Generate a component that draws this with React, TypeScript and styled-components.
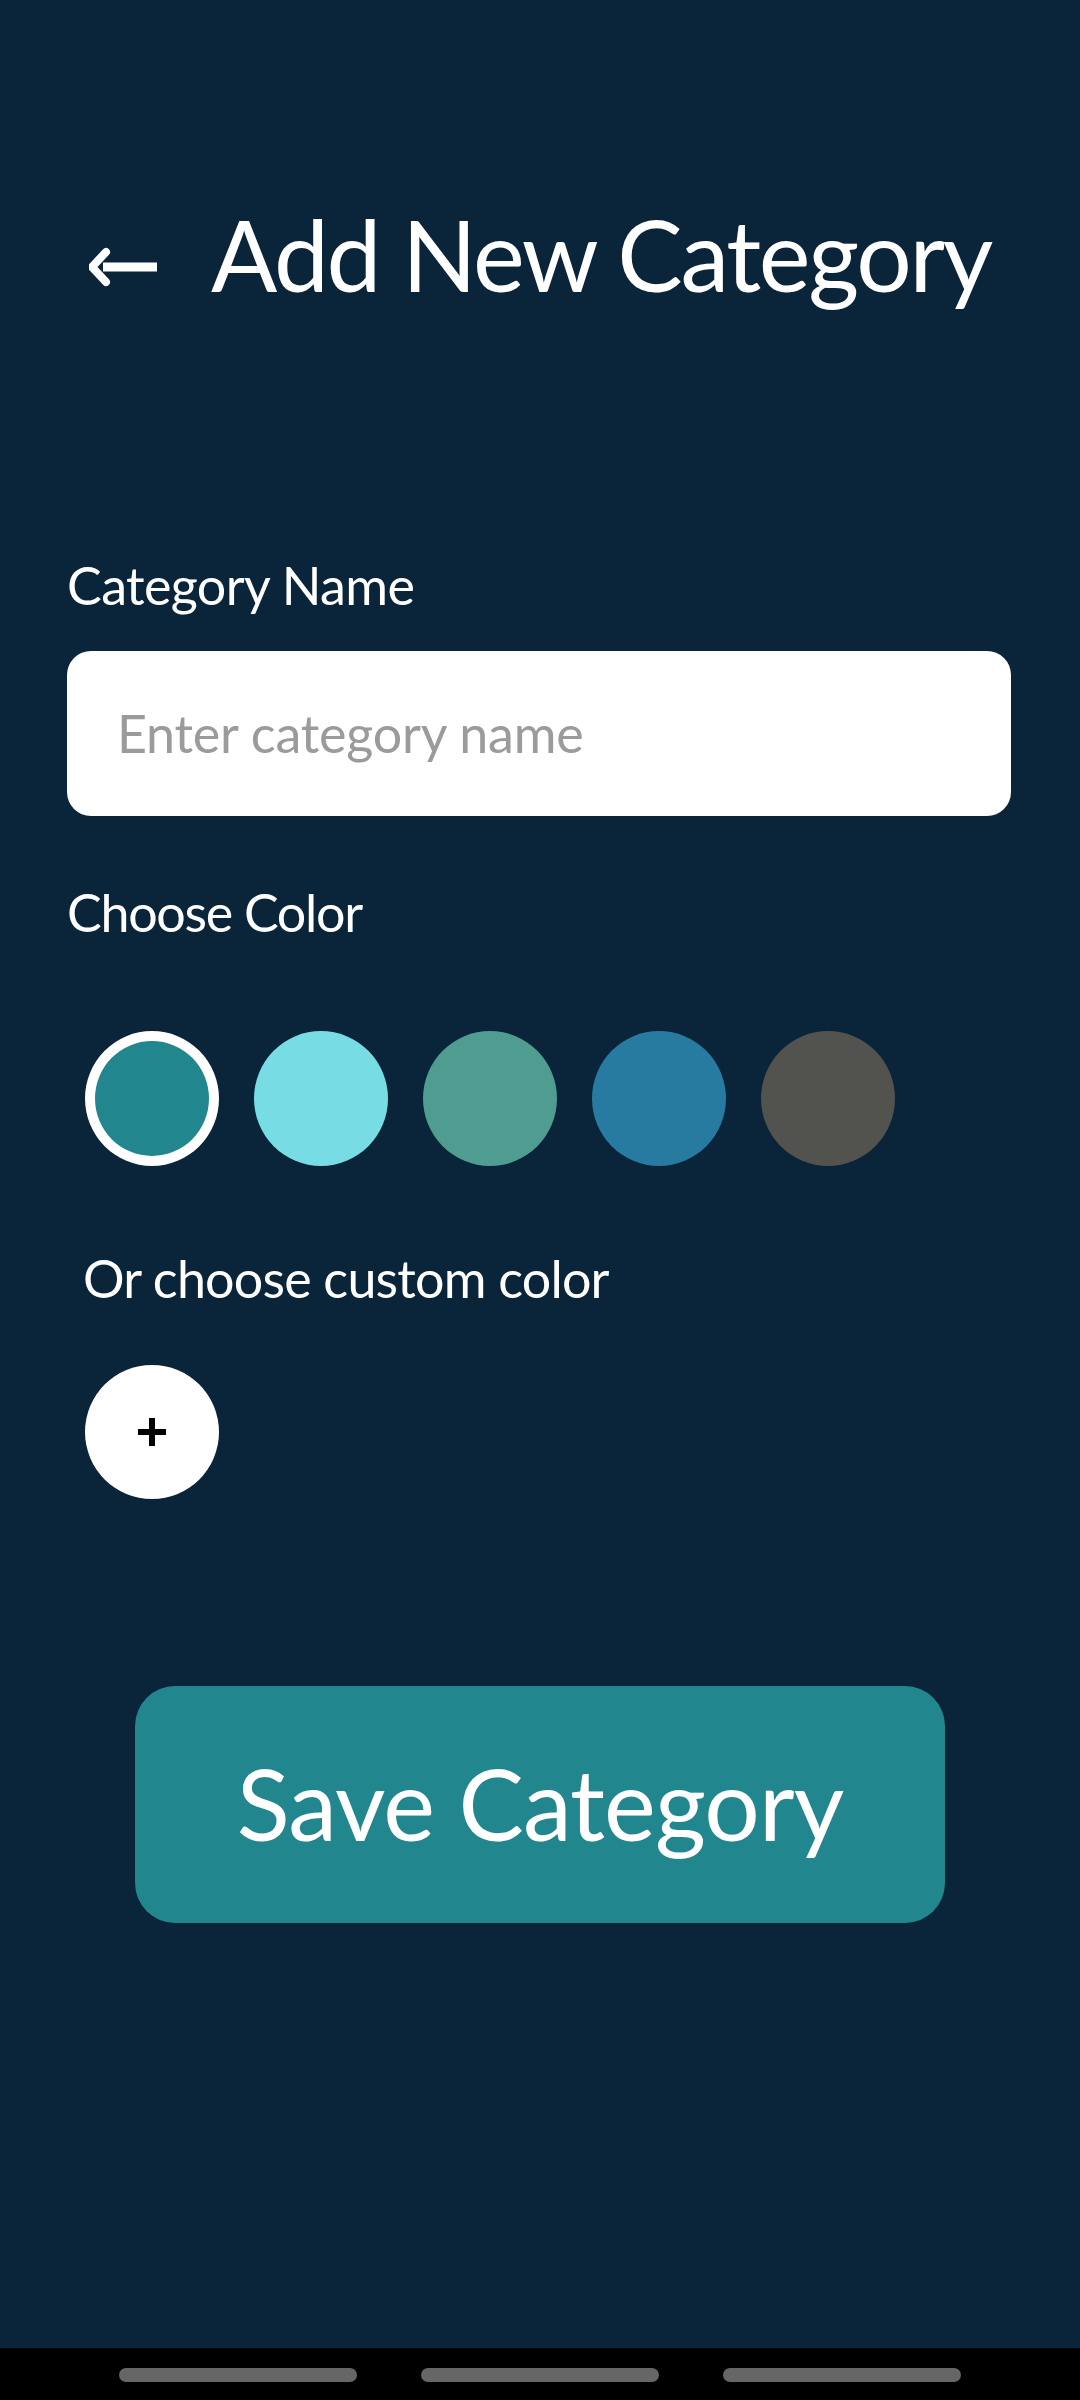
import React from "react";
import styled, { createGlobalStyle } from "styled-components";

const Global = createGlobalStyle`
  html, body { margin: 0; padding: 0; background: #0a243a; }
  * { box-sizing: border-box; }
  body { font-family: Lato, "Open Sans", sans-serif; }
`;

const Page = styled.div`
  min-height: 2400px;
  display: flex;
  flex-direction: column;
  background: #0a243a;
  color: #ffffff;
`;

const Main = styled.main`
  flex: 1;
  display: flex;
  flex-direction: column;
  padding: 196px 69px 0 67px;
`;

const Header = styled.header`
  display: flex;
  align-items: center;
  gap: 52px;
  padding-left: 22px;
`;

const BackIcon = styled.svg`
  width: 70px;
  height: 40px;
  margin-top: 24px;
  flex: none;
`;

const Title = styled.h1`
  margin: 0;
  font-size: 98px;
  line-height: 1.2;
  font-weight: 400;
  letter-spacing: -2.3px;
  white-space: nowrap;
`;

const Label = styled.div<{ $top: number; $indent?: number; $spacing?: number }>`
  margin-top: ${(p) => p.$top}px;
  padding-left: ${(p) => p.$indent ?? 0}px;
  font-size: 52px;
  line-height: 1.2;
  letter-spacing: ${(p) => p.$spacing ?? -0.9}px;
  white-space: nowrap;
`;

const NameInput = styled.input`
  margin-top: 35px;
  height: 165px;
  width: 100%;
  border: none;
  outline: none;
  border-radius: 24px;
  background: #ffffff;
  padding: 0 50px;
  font-family: Lato, "Open Sans", sans-serif;
  font-size: 52px;
  letter-spacing: -0.2px;
  color: #222;
  &::placeholder { color: #9b9b9b; }
`;

const Swatches = styled.div`
  margin-top: 88px;
  display: flex;
  gap: 35px;
  padding-left: 18px;
`;

const Swatch = styled.div<{ $color: string; $selected?: boolean }>`
  width: 134px;
  height: 135px;
  border-radius: 50%;
  background: ${(p) => p.$color};
  border: ${(p) => (p.$selected ? "10px solid #ffffff" : "none")};
  flex: none;
`;

const CustomRow = styled.div`
  margin-top: 55px;
  padding-left: 18px;
`;

const PlusCircle = styled.div`
  width: 134px;
  height: 134px;
  border-radius: 50%;
  background: #ffffff;
  display: flex;
  align-items: center;
  justify-content: center;
`;

const SaveButton = styled.button`
  margin: 187px 66px 0 68px;
  height: 237px;
  border: none;
  border-radius: 40px;
  background: #22868f;
  color: #ffffff;
  font-family: Lato, "Open Sans", sans-serif;
  font-size: 98px;
  line-height: 1.2;
  letter-spacing: -0.9px;
  display: flex;
  align-items: center;
  justify-content: center;
`;

const NavBar = styled.div`
  height: 52px;
  background: #000000;
  display: flex;
  justify-content: center;
  align-items: flex-start;
  gap: 64px;
  padding-top: 20px;
`;

const Pill = styled.div`
  width: 238px;
  height: 14px;
  border-radius: 7px;
  background: #666666;
`;

const colors = ["#22868f", "#78dce5", "#4f9c90", "#277aa0", "#52524f"];

export default function App() {
  return (
    <Page>
      <Global />
      <Main>
        <Header>
          <BackIcon viewBox="0 0 70 40">
            <path d="M14 20 H68" stroke="#fff" strokeWidth="9" strokeLinecap="butt" />
            <path d="M17 5 L3 20 L17 35" stroke="#fff" strokeWidth="8" fill="none" strokeLinecap="round" strokeLinejoin="round" />
          </BackIcon>
          <Title>Add New Category</Title>
        </Header>
        <Label $top={240} $spacing={-0.6}>Category Name</Label>
        <NameInput placeholder="Enter category name" />
        <Label $top={65} $spacing={-1.3}>Choose Color</Label>
        <Swatches>
          {colors.map((c, i) => (
            <Swatch key={c} $color={c} $selected={i === 0} />
          ))}
        </Swatches>
        <Label $top={81} $indent={16} $spacing={-0.8}>Or choose custom color</Label>
        <CustomRow>
          <PlusCircle>
            <svg width="32" height="32" viewBox="0 0 32 32">
              <path d="M16 2 V30 M2 16 H30" stroke="#000" strokeWidth="6" />
            </svg>
          </PlusCircle>
        </CustomRow>
        <SaveButton>Save Category</SaveButton>
      </Main>
      <NavBar>
        <Pill />
        <Pill />
        <Pill />
      </NavBar>
    </Page>
  );
}
